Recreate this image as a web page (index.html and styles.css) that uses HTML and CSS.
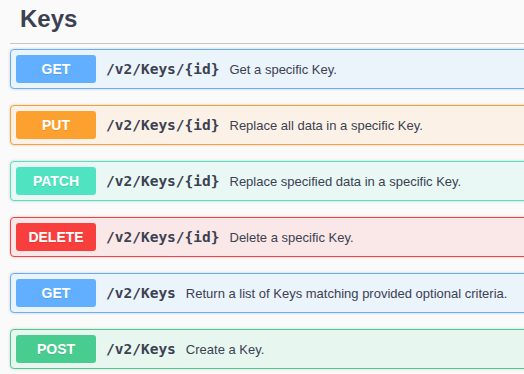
FILE: index.html
```html
<!DOCTYPE html>
<html lang="en">
<head>
    <meta charset="UTF-8">
    <meta name="viewport" content="width=device-width, initial-scale=1.0">
    <title>Keys</title>
    <link rel="stylesheet" href="styles.css">
</head>
<body>

    <div class="tag-section">
        <h4 class="opblock-tag">Keys</h4>

        <div class="opblock opblock-get">
            <div class="opblock-summary">
                <span class="method">GET</span>
                <span class="path">/v2/Keys/{id}</span>
                <span class="desc">Get a specific Key.</span>
            </div>
        </div>

        <div class="opblock opblock-put">
            <div class="opblock-summary">
                <span class="method">PUT</span>
                <span class="path">/v2/Keys/{id}</span>
                <span class="desc">Replace all data in a specific Key.</span>
            </div>
        </div>

        <div class="opblock opblock-patch">
            <div class="opblock-summary">
                <span class="method">PATCH</span>
                <span class="path">/v2/Keys/{id}</span>
                <span class="desc">Replace specified data in a specific Key.</span>
            </div>
        </div>

        <div class="opblock opblock-delete">
            <div class="opblock-summary">
                <span class="method">DELETE</span>
                <span class="path">/v2/Keys/{id}</span>
                <span class="desc">Delete a specific Key.</span>
            </div>
        </div>

        <div class="opblock opblock-get">
            <div class="opblock-summary">
                <span class="method">GET</span>
                <span class="path">/v2/Keys</span>
                <span class="desc">Return a list of Keys matching provided optional criteria.</span>
            </div>
        </div>

        <div class="opblock opblock-post">
            <div class="opblock-summary">
                <span class="method">POST</span>
                <span class="path">/v2/Keys</span>
                <span class="desc">Create a Key.</span>
            </div>
        </div>
    </div>

</body>
</html>
```

FILE: styles.css
```css
body {
    font-family: 'Liberation Sans', Arial, sans-serif;
    margin: 0;
    padding: 0 0 0 10px;
    background: #fafafa;
    color: #3b4151;
    overflow: hidden;
}

.tag-section {
    width: 540px;
}

.opblock-tag {
    margin: 0 0 5px;
    padding: 6px 20px 11px 10px;
    font-size: 24px;
    line-height: 26px;
    font-weight: 700;
    border-bottom: 1px solid #c4c6cb;
}

.opblock {
    margin-bottom: 16px;
    border: 1px solid #000;
    border-radius: 4px;
    box-shadow: 0 0 3px rgba(0, 0, 0, 0.19);
}

.opblock-summary {
    display: flex;
    align-items: center;
    padding: 5px;
}

.method {
    flex: none;
    width: 80px;
    height: 28px;
    line-height: 28px;
    border-radius: 3px;
    color: #fff;
    font-size: 14px;
    font-weight: 700;
    text-align: center;
    text-shadow: 0 1px 0 rgba(0, 0, 0, 0.1);
}

.path {
    padding: 0 10px;
    font-family: 'DejaVu Sans Mono', monospace;
    font-size: 14.5px;
    font-weight: 700;
}

.desc {
    font-size: 13px;
}

.opblock-get {
    background: #ebf3fb;
    border-color: #61affe;
}

.opblock-get .method {
    background: #61affe;
}

.opblock-put {
    background: #fbf1e6;
    border-color: #fca130;
}

.opblock-put .method {
    background: #fca130;
}

.opblock-patch {
    background: #e9f8f5;
    border-color: #50e3c2;
}

.opblock-patch .method {
    background: #50e3c2;
}

.opblock-delete {
    background: #fae7e7;
    border-color: #f93e3e;
}

.opblock-delete .method {
    background: #f93e3e;
}

.opblock-post {
    background: #e8f6f0;
    border-color: #49cc90;
}

.opblock-post .method {
    background: #49cc90;
}
```
